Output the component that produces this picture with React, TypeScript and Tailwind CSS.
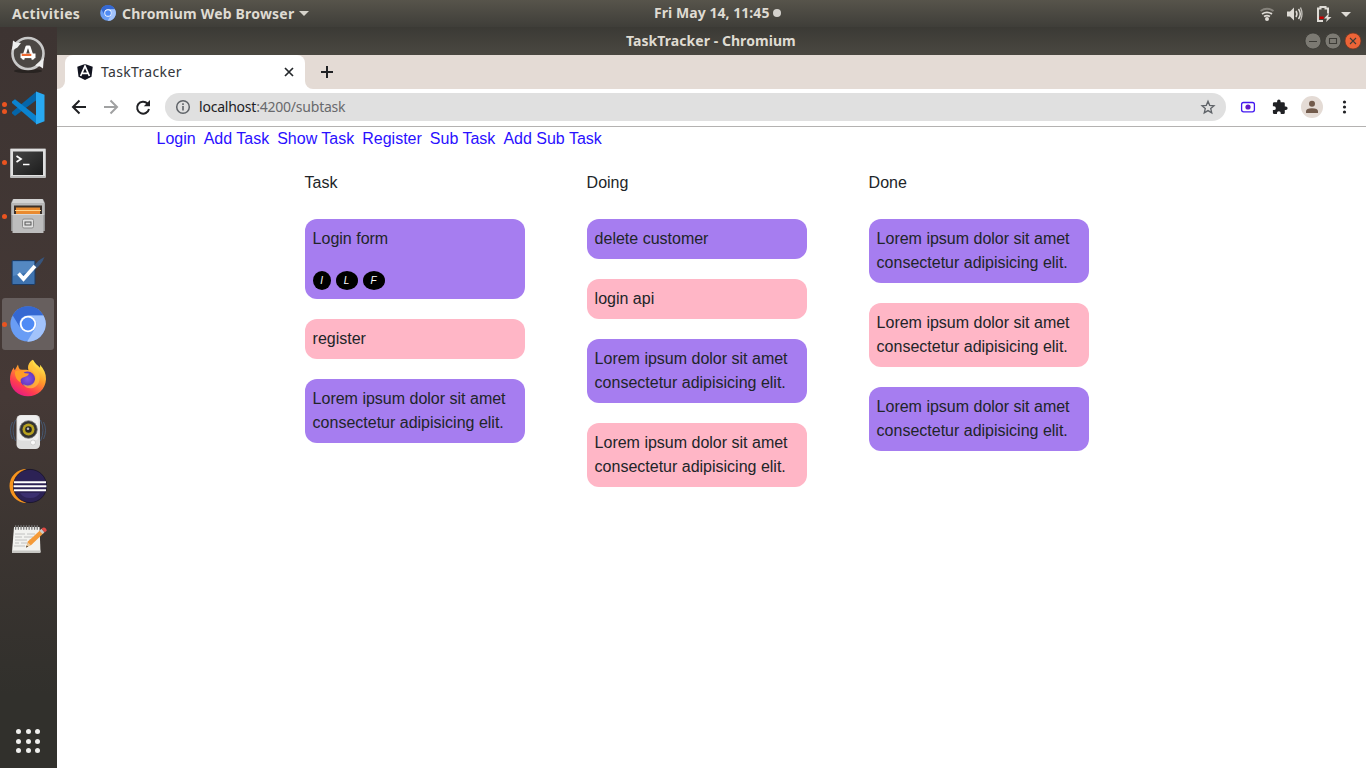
import React from "react";

type CardData = { text: string; tone: "violet" | "pink"; people?: string[] };
type ColumnData = { title: string; cards: CardData[] };

const LOREM = "Lorem ipsum dolor sit amet consectetur adipisicing elit.";

const columns: ColumnData[] = [
  {
    title: "Task",
    cards: [
      { text: "Login form", tone: "violet", people: ["I", "L", "F"] },
      { text: "register", tone: "pink" },
      { text: LOREM, tone: "violet" },
    ],
  },
  {
    title: "Doing",
    cards: [
      { text: "delete customer", tone: "violet" },
      { text: "login api", tone: "pink" },
      { text: LOREM, tone: "violet" },
      { text: LOREM, tone: "pink" },
    ],
  },
  {
    title: "Done",
    cards: [
      { text: LOREM, tone: "violet" },
      { text: LOREM, tone: "pink" },
      { text: LOREM, tone: "violet" },
    ],
  },
];

const links = ["Login", "Add Task", "Show Task", "Register", "Sub Task", "Add Sub Task"];

function ChromiumLogo({ className }: { className: string }) {
  return (
    <svg viewBox="0 0 36 36" className={className}>
      <circle cx="18" cy="18" r="17.6" fill="#699df5" />
      <path d="M2.6 9.3A17.6 17.6 0 0 1 33.5 9.5H18A8.5 8.5 0 0 0 10.4 22z" fill="#3568d2" />
      <path d="M33.5 9.5A17.6 17.6 0 0 1 17.2 35.6L25.4 22A8.5 8.5 0 0 0 23 11.2L18 9.5z" fill="#a2c3fb" />
      <circle cx="18" cy="18" r="8.2" fill="#fff" />
      <circle cx="18" cy="18" r="6.4" fill="#4f8bf5" />
    </svg>
  );
}

function Slot({ dots = 0, active = false, children }: { dots?: number; active?: boolean; children: React.ReactNode }) {
  return (
    <div className="flex h-[54px] w-[57px] shrink-0 items-center">
      <div className={active ? "ml-[2px] flex h-[52px] w-[52px] items-center rounded-[3px] bg-[#675f5e]" : "ml-[2px] flex h-[52px] w-[52px] items-center"}>
        <div className="flex w-[5px] shrink-0 flex-col gap-[2px]">
          {Array.from({ length: dots }, (_, i) => (
            <span key={i} className="h-[5px] w-[5px] rounded-full bg-[#e95420]" />
          ))}
        </div>
        <div className="flex w-[42px] items-center justify-center">{children}</div>
      </div>
    </div>
  );
}

function Dock() {
  return (
    <aside className="flex w-[57px] shrink-0 flex-col bg-linear-to-b from-[#3d3432] via-[#453936] via-50% to-[#31302c] to-90%">
      <Slot>
        <svg className="h-[40px] w-[40px]" viewBox="0 0 40 40">
          <ellipse cx="20" cy="37" rx="14" ry="2" fill="#282321" />
          <circle cx="20" cy="19.5" r="15.5" fill="#4b4744" stroke="#c9c9c9" strokeWidth="2.6" />
          <path d="M4.500 11.500l.5-5 3 2 5 .5-3.500 4.500-5.500 3z" fill="#efefef" />
          <path d="M35.500 27.500l-.5 7-3-2-5-1 4-3.500 5-4z" fill="#efefef" />
          <path d="M14.800 25.500l4-12.500h2.400l4 12.500" fill="none" stroke="#fff" strokeWidth="2.800" strokeLinejoin="round" />
          <path d="M12.500 21.800h15" stroke="#fff" strokeWidth="4.600" />
          <path d="M13.700 20.900h9.600" stroke="#ef6a32" strokeWidth="2.200" />
        </svg>
      </Slot>
      <Slot dots={2}>
        <svg className="h-[34px] w-[34px]" viewBox="0 0 34 34">
          <path d="M1 22.500l3 2.500L25.500 9V.5L1 21z" fill="#0565a9" />
          <path d="M1 10.500l3-2.200L25.500 25v8L1 12z" fill="#0b83cf" />
          <path d="M25 .5l8.500 3.300v26.400L25 33.500z" fill="#28a9f2" />
        </svg>
      </Slot>
      <Slot dots={1}>
        <svg className="mt-[2px] h-[32px] w-[38px]" viewBox="0 0 38 32">
          <defs>
            <linearGradient id="term" x1="0" y1="0" x2="1" y2="1">
              <stop offset="0" stopColor="#454545" />
              <stop offset="1" stopColor="#1c1c1c" />
            </linearGradient>
          </defs>
          <rect x="1" y="1.500" width="36" height="29.500" rx="1" fill="#b9b9b9" />
          <rect x="2" y="2" width="34" height="27" fill="#e0e0e0" />
          <rect x="4" y="4.500" width="30" height="23.500" fill="url(#term)" />
          <path d="M7.500 9l4.500 3-4.500 3" fill="none" stroke="#fff" strokeWidth="1.700" />
          <path d="M14 17.500h6.500" stroke="#fff" strokeWidth="1.500" />
        </svg>
      </Slot>
      <Slot dots={1}>
        <svg className="h-[36px] w-[36px]" viewBox="0 0 36 36">
          <path d="M1 5l2-4h30l2 4v28H1z" fill="#8f8f8f" />
          <path d="M3.500 1h29L34.500 5.500H1.500z" fill="#d2d2d2" />
          <path d="M1.500 5.500h33V17h-33z" fill="#b9b9b9" />
          <rect x="4" y="7.500" width="28" height="8.500" fill="#3b3029" />
          <path d="M6 9.500h24V16H6z" fill="#e98a2f" />
          <path d="M5 12h26v1H5z" fill="#ffd38a" />
          <path d="M2.500 16h31v19h-31z" fill="#bdbdbd" />
          <path d="M2.500 16h31v1h-31z" fill="#d8d8d8" />
          <rect x="12.500" y="21" width="11" height="9" rx="1.500" fill="#e0e0e0" stroke="#8a8a8a" />
          <rect x="15" y="24" width="6" height="3" fill="#ddd" stroke="#555" />
        </svg>
      </Slot>
      <Slot>
        <svg className="mt-[1px] h-[36px] w-[38px]" viewBox="0 0 38 36">
          <rect x="3" y="7.500" width="23" height="24" rx="1" fill="#3e72ae" stroke="#1c3a62" />
          <path d="M4 8.500h21v9L4 23z" fill="#5488c2" />
          <path d="M25 13q4-6 10.500-9-3 8-10 13z" fill="#345d90" opacity=".8" />
          <path d="M9.500 20.500l5 5.500L26 13" fill="none" stroke="#fff" strokeWidth="3.600" />
        </svg>
      </Slot>
      <Slot dots={1} active>
        <ChromiumLogo className="h-[36px] w-[36px]" />
      </Slot>
      <Slot>
        <svg className="h-[38px] w-[38px]" viewBox="0 0 38 38">
          <defs>
            <linearGradient id="fox" x1=".85" y1=".1" x2=".3" y2="1">
              <stop offset="0" stopColor="#fff04f" />
              <stop offset=".4" stopColor="#ff9a2a" />
              <stop offset=".75" stopColor="#ff3d4f" />
              <stop offset="1" stopColor="#e51b84" />
            </linearGradient>
            <radialGradient id="globe">
              <stop offset="0" stopColor="#8156e6" />
              <stop offset="1" stopColor="#6337bd" />
            </radialGradient>
          </defs>
          <path d="M24 .8c2.200 4 4.200 5 7 8 .3-1.500 0-2.500-.2-3.300C35 10 37.200 15 37 20.200 36.600 30 28.800 37.200 19 37.200 9 37.200 1.400 30 1 20.400c-.1-4.600 1.100-8.300 3.800-12 .2 1 .4 2 1 2.800L9 5.600c.3 2.200 1 4 2 5 3 .2 6-.3 8.500.6C18 7.200 20.500 2.500 24 .8z" fill="url(#fox)" />
          <circle cx="18.500" cy="20" r="7.600" fill="url(#globe)" />
          <path d="M6 12.500c3.500-2 7.200-.6 10 1.700 1.500.2 3 .2 4 .6-1 2.400-3.700 2.700-6.600 4-2 1-2.200 3-1.300 4.700C8 22 5.500 17 6 12.500z" fill="#ff9d26" />
          <path d="M20 10c5 2 7.500 6 6 11-1.500 5-7 7-12 4 3 6 13 6 16-2 2-6-.5-11-4-14-2-2-2.500-4.500-2-8.200-3.500 2-5 5.500-4 9.200z" fill="#ffc53a" opacity=".65" />
        </svg>
      </Slot>
      <Slot>
        <svg className="h-[38px] w-[40px]" viewBox="0 0 40 38">
          <g fill="none" stroke="#465871" strokeWidth="1">
            <path d="M7.500 7q-5 10 0 21M4.500 9q-4 8 0 17M32.500 7q5 10 0 21M35.500 9q4 8 0 17" />
          </g>
          <rect x="8.500" y="2" width="23.500" height="34" rx="4.500" fill="#dedede" />
          <rect x="9.500" y="2.500" width="21" height="25" rx="4" fill="#efefef" />
          <circle cx="20.500" cy="16.500" r="8.800" fill="#333" stroke="#777" strokeWidth=".8" />
          <circle cx="20.500" cy="16.500" r="6" fill="#b6a11f" />
          <circle cx="20.500" cy="16.500" r="3.300" fill="#252525" />
          <circle cx="20" cy="15.800" r="1.300" fill="#bbb" />
          <circle cx="25" cy="29.500" r="2.500" fill="#fafafa" stroke="#bbb" strokeWidth=".6" />
        </svg>
      </Slot>
      <Slot>
        <svg className="h-[36px] w-[40px]" viewBox="0 0 40 36">
          <path d="M18.500 1A17 17 0 0 0 18.500 35 20 20 0 0 1 18.500 1z" fill="#f7941e" />
          <circle cx="22" cy="18" r="16.600" fill="#2c2255" stroke="#15112a" strokeWidth=".8" />
          <path d="M12 25h20q-3 5-10 5t-10-5z" fill="#3b3070" />
          <path d="M6 14.200h32M5.600 18.200h32.800M6 22.200h32" stroke="#fff" strokeWidth="2" />
        </svg>
      </Slot>
      <Slot>
        <svg className="mb-[2px] h-[34px] w-[40px]" viewBox="0 0 40 34">
          <path d="M6 5h25.500l1 25H4z" fill="#f2f2ef" />
          <path d="M4 28.500h28.500V31H4z" fill="#c7c7c3" />
          <path d="M7 5.500h24" stroke="#777" strokeWidth="4.500" strokeDasharray="1.300 1.400" />
          <path d="M7 12h10m2 0h8M7 15h7m2 0h9M7 18h12m2 0h4M7 21h4m2 0h8M6 24h11" stroke="#bbb" strokeWidth=".9" />
          <path d="M18 25.500l2.200-6.200L33 7.500l3 3.300-12.500 12z" fill="#f49a38" />
          <path d="M18 25.500l1.800-5 3 2.800z" fill="#e8cba0" />
          <path d="M18 25.500l.8-2 1.200 1.200z" fill="#222" />
          <path d="M31.500 8.800l2-2 3 3.400-2 1.800z" fill="#ccc" />
          <path d="M33.500 6.800q2.500-2.500 4.500 0t-1.500 3.400z" fill="#e04a45" />
        </svg>
      </Slot>
      <div className="mt-auto grid w-[57px] grid-cols-[repeat(3,5px)] justify-center gap-[4.500px] pr-[1px] pb-[15px]">
        {Array.from({ length: 9 }, (_, i) => (
          <span key={i} className="h-[5px] w-[5px] rounded-full bg-[#efefed]" />
        ))}
      </div>
    </aside>
  );
}

function TopBar() {
  return (
    <header className="grid h-[27px] shrink-0 grid-cols-[654px_1fr_auto] items-center bg-linear-to-b from-[#57544b] to-[#3f3e39] font-['Noto_Sans','Open_Sans',sans-serif] text-[14px] leading-[20px] font-bold text-[#dfdbd2]">
      <div className="flex items-center pl-[12px] whitespace-nowrap">
        <span className="w-[88px] tracking-[0.32px]">Activities</span>
        <ChromiumLogo className="mt-[-1px] h-[16px] w-[16px]" />
        <span className="ml-[6px] w-[173px] tracking-[0.19px]">Chromium Web Browser</span>
        <svg className="ml-[4px] h-[5px] w-[10px]" viewBox="0 0 10 5">
          <path d="M0 0h10L5 5z" fill="#d6d3cb" />
        </svg>
      </div>
      <div className="flex items-center whitespace-nowrap">
        <span className="-mt-px w-[115px] tracking-[0.05px]">Fri May 14, 11:45</span>
        <span className="-mt-px ml-[4px] h-[8px] w-[8px] rounded-full bg-[#d4d2cd]" />
      </div>
      <svg className="h-[20px] w-[106px]" viewBox="1260 3 106 20">
        <g fill="none" strokeWidth="2">
          <path d="M1260.500 10q6.500-4.500 13 0" stroke="#85827b" />
          <path d="M1262 13q5-3.300 10 0" stroke="#dedbd5" strokeWidth="1.700" />
          <path d="M1264 15.600q3-1.800 6 0" stroke="#dedbd5" strokeWidth="1.700" />
        </g>
        <circle cx="1267" cy="18" r="2" fill="#dedbd5" />
        <path d="M1287 10.500h3l4-4v13l-4-4h-3z" fill="#dedbd5" />
        <path d="M1296 10q2 3 0 6M1298.500 8q3.500 5 0 10" fill="none" stroke="#dedbd5" strokeWidth="1.500" />
        <path d="M1300.500 6.500q3 6.500 0 13" fill="none" stroke="#c4c1bb" strokeWidth="1.300" />
        <path d="M1323 20h-5V7.500h2.500V6h5v1.500h2.500v5" fill="none" stroke="#dedbd5" strokeWidth="2" />
        <path d="M1319.500 15.500h4.200v2.500h-4.200z" fill="#c80000" />
        <path d="M1329 12l-5 5.500h3l-1 3.500 5.500-5h-3.300z" fill="#dedbd5" />
        <path d="M1341 11h10l-5 5z" fill="#dedbd5" />
      </svg>
    </header>
  );
}

function TitleBar() {
  return (
    <div className="flex h-[28px] shrink-0 items-center bg-linear-to-b from-[#3b3a35] to-[#4a4841] font-['Noto_Sans','Open_Sans',sans-serif] text-[14px] leading-[20px] font-bold text-[#dfdbd2]">
      <div className="w-[1247px] pl-[569px] whitespace-nowrap tracking-[0.06px]">TaskTracker - Chromium</div>
      <svg className="h-[18px] w-[60px]" viewBox="0 0 60 18">
        <circle cx="9" cy="9" r="8" fill="#7c7a73" stroke="#34332f" strokeWidth=".7" />
        <circle cx="29" cy="9" r="8" fill="#7c7a73" stroke="#34332f" strokeWidth=".7" />
        <circle cx="49" cy="9" r="8" fill="#ed6437" stroke="#6e3521" strokeWidth=".7" />
        <g fill="none" stroke="#3d3c37" strokeWidth="1.100">
          <path d="M5 9.500h8M25.500 6.500h7v5h-7z" />
          <path d="M46 6l6 6m0-6l-6 6" />
        </g>
      </svg>
    </div>
  );
}

function TabStrip() {
  return (
    <div className="flex h-[34px] shrink-0 items-stretch bg-[#e4dbd5]">
      <div className="flex w-[8px] bg-white"><span className="w-full rounded-br-[8px] bg-[#e4dbd5]" /></div>
      <div className="flex w-[240px] items-center rounded-t-[8px] bg-white pr-[10px] pl-[12px]">
        <svg className="h-[16px] w-[16px]" viewBox="0 0 16 16">
          <path d="M8 0l7.700 2.700-1.200 10L8 16l-6.500-3.300L.3 2.700z" fill="#11131f" />
          <path d="M3.600 12L8 2.200 12.400 12M5.500 9.300h5" fill="none" stroke="#fff" strokeWidth="1.700" />
        </svg>
        <span className="ml-[8px] flex-1 font-['Noto_Sans','Open_Sans',sans-serif] text-[14px] leading-[20px] tracking-[0.34px] text-[#33363a]">TaskTracker</span>
        <svg className="h-[12px] w-[12px]" viewBox="0 0 12 12">
          <path d="M2 2l8 8m0-8l-8 8" stroke="#25282b" strokeWidth="1.700" />
        </svg>
      </div>
      <div className="flex w-[8px] bg-white"><span className="w-full rounded-bl-[8px] bg-[#e4dbd5]" /></div>
      <svg className="mt-[11px] ml-[8px] h-[12px] w-[12px]" viewBox="0 0 12 12">
        <path d="M6 0v12M0 6h12" stroke="#202124" strokeWidth="2" />
      </svg>
    </div>
  );
}

function Toolbar() {
  return (
    <div className="flex h-[38px] shrink-0 items-center border-b border-[#b4b2b1] bg-white pb-[1px]">
      <svg className="h-[24px] w-[108px]" viewBox="57 95 108 24">
        <g fill="none" strokeWidth="2">
          <path d="M86 107H73.500M79.500 100.500L73 107l6.500 6.500" stroke="#202124" />
          <path d="M104 107h12.500M110.500 100.500l6.500 6.500-6.500 6.500" stroke="#a0a1a2" />
          <path d="M147.500 103.500A6 6 0 1 0 149 109" stroke="#202124" />
        </g>
        <path d="M150 100v6.200h-6.200z" fill="#202124" />
      </svg>
      <div className="flex h-[28px] w-[1061px] items-center rounded-full bg-[#e0e0e0] pr-[10px] pl-[10px]">
        <svg className="h-[16px] w-[16px]" viewBox="0 0 16 16" fill="none" stroke="#5f6368" strokeWidth="1.500">
          <circle cx="8" cy="8" r="6.300" />
          <path d="M8 7v4.500M8 4.200v1.700" strokeWidth="1.600" />
        </svg>
        <span className="ml-[8px] flex-1 font-['Noto_Sans','Open_Sans',sans-serif] text-[14px] leading-[20px] tracking-[-0.22px] text-[#68696c]">
          <span className="text-[#202124]">localhost</span>:4200/subtask
        </span>
        <svg className="h-[16px] w-[16px]" viewBox="0 0 24 24">
          <path d="M12 3.500l2.500 6 6.500.6-4.900 4.300 1.500 6.400L12 17.400l-5.600 3.400 1.500-6.400L3 10.100l6.500-.6z" fill="none" stroke="#5f6368" strokeWidth="2" />
        </svg>
      </div>
      <svg className="h-[26px] w-[140px]" viewBox="1226 94 140 26">
        <rect x="1241.600" y="102.500" width="12.800" height="9.300" rx="2" fill="none" stroke="#4318f0" strokeWidth="1.300" />
        <circle cx="1248" cy="107" r="2.600" fill="#6418c8" />
        <path transform="translate(1271.500 98.700) scale(.7)" fill="#202124" d="M20.500 11H19V7a2 2 0 0 0-2-2h-4V3.500a2.500 2.500 0 0 0-5 0V5H4a2 2 0 0 0-2 2v3.800h1.500a2.700 2.700 0 0 1 0 5.400H2V20a2 2 0 0 0 2 2h3.800v-1.500a2.700 2.700 0 0 1 5.400 0V22H17a2 2 0 0 0 2-2v-4h1.500a2.500 2.500 0 0 0 0-5z" />
        <circle cx="1312" cy="107" r="11" fill="#e4dbd5" />
        <circle cx="1312" cy="103.800" r="3" fill="#725b4c" />
        <path d="M1306 113v-1.700q0-3 6-3t6 3v1.700z" fill="#725b4c" />
        <g fill="#202124">
          <circle cx="1344.500" cy="102" r="1.600" />
          <circle cx="1344.500" cy="107" r="1.600" />
          <circle cx="1344.500" cy="112" r="1.600" />
        </g>
      </svg>
    </div>
  );
}

function Card({ card }: { card: CardData }) {
  return (
    <article className={card.tone === "violet" ? "rounded-[12px] bg-[#a67df0] p-[8px]" : "rounded-[12px] bg-[#ffb6c6] p-[8px]"}>
      <p>{card.text}</p>
      {card.people && (
        <div className="mt-[20px] flex h-[20px] items-start gap-[5px]">
          {card.people.map((p) => (
            <span key={p} className={p === "I" ? "flex h-[19px] w-[18px] items-center justify-center rounded-[50%] bg-black text-[10px] leading-[15px] text-white italic" : "flex h-[19px] w-[22px] items-center justify-center rounded-[50%] bg-black text-[10px] leading-[15px] text-white italic"}>
              {p}
            </span>
          ))}
        </div>
      )}
    </article>
  );
}

export default function App() {
  return (
    <div className="flex h-[768px] w-[1366px] flex-col overflow-hidden bg-white">
      <TopBar />
      <div className="flex min-h-0 flex-1">
        <Dock />
        <div className="flex min-w-0 flex-1 flex-col">
          <TitleBar />
          <TabStrip />
          <Toolbar />
          <main className="flex-1 bg-white font-['Liberation_Sans',Arial,sans-serif] text-[16px] leading-[24px] text-[#212529]">
            <nav className="flex gap-[8px] pl-[99.500px] text-[#2a10ff]">
              {links.map((l) => (
                <a key={l} className="whitespace-nowrap">{l}</a>
              ))}
            </nav>
            <div className="mt-[20px] flex items-start gap-[62px] pl-[247.600px]">
              {columns.map((c) => (
                <section key={c.title} className="flex w-[220px] flex-col gap-[20px]">
                  <h2 className="mb-[4px]">{c.title}</h2>
                  {c.cards.map((card, i) => (
                    <Card key={i} card={card} />
                  ))}
                </section>
              ))}
            </div>
          </main>
        </div>
      </div>
    </div>
  );
}
